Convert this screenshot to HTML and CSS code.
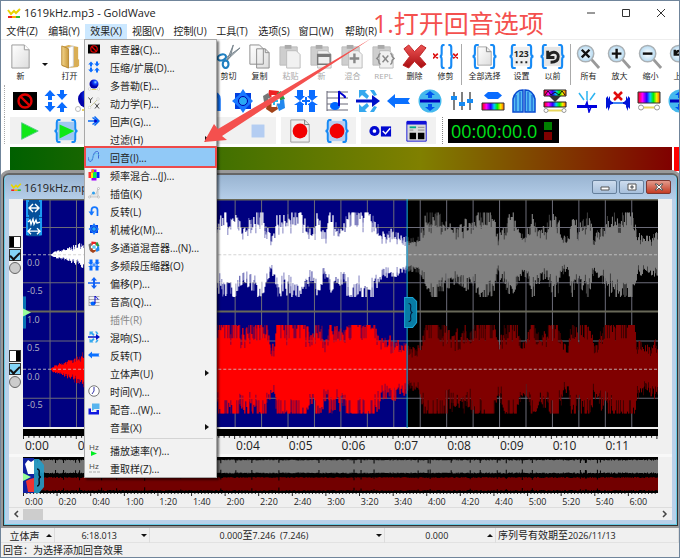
FILE: index.html
```html
<!DOCTYPE html>
<html lang="zh-CN">
<head>
<meta charset="utf-8">
<title>1619kHz.mp3 - GoldWave</title>
<link rel="stylesheet" href="styles.css">
</head>
<body>
<svg class="sprite" aria-hidden="true">
  <defs>
    <linearGradient id="rainbow"><stop offset="0" stop-color="#f00"/><stop offset=".2" stop-color="#f0f"/><stop offset=".4" stop-color="#20f"/><stop offset=".55" stop-color="#0cf"/><stop offset=".7" stop-color="#0e0"/><stop offset=".85" stop-color="#fe0"/><stop offset="1" stop-color="#f50"/></linearGradient>
    <linearGradient id="paper" x2="1" y2="1"><stop offset="0" stop-color="#fff"/><stop offset="1" stop-color="#ddd"/></linearGradient>
    <linearGradient id="folder"><stop offset="0" stop-color="#f4d58c"/><stop offset="1" stop-color="#c99a3c"/></linearGradient>
    <linearGradient id="crimson" x2="0" y2="1"><stop offset="0" stop-color="#e55"/><stop offset="1" stop-color="#a80c10"/></linearGradient>
    <radialGradient id="ball" cx=".65" cy=".3"><stop offset="0" stop-color="#9df"/><stop offset=".4" stop-color="#14f"/><stop offset="1" stop-color="#00a"/></radialGradient>
    <radialGradient id="lens"><stop offset="0" stop-color="#fff"/><stop offset="1" stop-color="#b5daf2"/></radialGradient>
  </defs>
  <symbol id="logo" viewBox="0 0 14 10"><path d="M1 2l3 4 3-3 2 2 4-4" fill="none" stroke="#e9d400" stroke-width="2"/><path d="M1 9h4" stroke="#e22" stroke-width="2"/><path d="M5 9h4" stroke="#fa0" stroke-width="2"/><path d="M9 9h4" stroke="#3b3" stroke-width="2"/></symbol>
  <symbol id="blocked" viewBox="0 0 24 24"><path d="M0 3h24v18H0z"/><circle cx="12" cy="12" r="6.5" fill="none" stroke="#e00000" stroke-width="2.4"/><path d="M7.5 7.5l9 9" stroke="#e00000" stroke-width="2.4"/></symbol>
  <symbol id="compress" viewBox="0 0 24 24"><g fill="#0a6cff"><path d="M6 1l5.500 6H8v4H4V7H.5zM6 23l5.500-6H8v-4H4v4H.5zM18 11l5.500-6H20V1h-4v4h-3.500zM18 13l5.500 6H20v4h-4v-4h-3.500z"/></g></symbol>
  <symbol id="doppler" viewBox="0 0 24 24"><circle cx="12" cy="10" r="9" fill="url(#ball)"/><circle cx="3" cy="20" r="2.500" fill="#fff" stroke="#bbb"/><circle cx="21" cy="20" r="2.500" fill="#fff" stroke="#bbb"/><path d="M7 21h10" stroke="#e8d060" stroke-width="2"/></symbol>
  <symbol id="dynamics" viewBox="0 0 24 24"><path d="M3 21L20 4" stroke="#c4c488" stroke-width="1.500"/><circle cx="20" cy="4" r="2.500" fill="#fff" stroke="#bbb"/><circle cx="3" cy="21" r="2.500" fill="#fff" stroke="#bbb"/><path d="M1 1l4 5 4-5M5 6v6M14 13l8 10M22 13l-8 10" fill="none" stroke="#444" stroke-width="2"/></symbol>
  <symbol id="echo" viewBox="0 0 24 24"><path d="M0 12h14M9 5l9 7-9 7M13 3l9 9-9 9" fill="none" stroke="#0668f5" stroke-width="3"/><circle cx="15" cy="12" r="3" fill="#00c"/></symbol>
  <symbol id="curve" viewBox="0 0 24 24"><path d="M0 12C1 24 8 24 10 12S19-1 21 3v12" fill="none" stroke="#3d66d6" stroke-width="2"/><path d="M0 15c5 7 9 1 11-5s8-8 12 0" fill="none" stroke="#57bde5" stroke-width="1.500"/></symbol>
  <symbol id="spectrum" viewBox="0 0 24 24"><path fill="#a000ff" d="M7 1h10v22H7z"/><path fill="#0020ff" d="M17 6h6v12h-6z"/><path fill="#f33" d="M1 6h6v12H1z"/><path fill="#fe0" d="M6 7h6v11H6z"/><path fill="#0e5" d="M10 6h7v12h-7z"/><path fill="#ff8a00" d="M7 1h5v6H7z"/></symbol>
  <symbol id="interp" viewBox="0 0 24 24"><path d="M3 20l6-8 7 2 4-11v17z" fill="#e6e6e6" stroke="#aaa"/><g fill="#fff" stroke="#999"><circle cx="3" cy="20" r="2"/><circle cx="21" cy="3" r="2"/><circle cx="21" cy="20" r="2"/></g><circle cx="11" cy="12" r="3" fill="#2b9fee"/></symbol>
  <symbol id="invert" viewBox="0 0 24 24"><path d="M7 20V10c0-8 12-8 12 0v12" fill="none" stroke="#1577ff" stroke-width="3.500"/><path d="M1 13h12l-6 8z" fill="#1577ff"/></symbol>
  <symbol id="gear" viewBox="0 0 24 24"><path fill="#003fe0" d="M4 4h16v16H4z"/><path fill="#1a78ff" d="M12 0l4 6 6 6-6 6-4 6-4-6-7-6 7-6z"/><circle cx="12" cy="12" r="4.500" fill="#29a9f4" stroke="#00a"/></symbol>
  <symbol id="mixer" viewBox="0 0 24 24"><path fill="#e22" d="M7 1l10 1-2 8-9-2z"/><path fill="#777" d="M1 7l5-3 4 8-7 7z"/><path fill="#2a9a42" d="M15 4l4-2 4 8-6 2z"/><path fill="#2288ee" d="M22 10l1 9-6 3-3-9z"/><path fill="#a3431a" d="M5 15l8-3 3 8-6 4-6-4z"/><path d="M12 6v12M6 12h12" stroke="#fff" stroke-width="5"/><path d="M12 8v8M8 12h8" stroke="#25bcec" stroke-width="2"/></symbol>
  <symbol id="inward" viewBox="0 0 24 24"><path fill="#0a6cff" d="M0 8h3V1h6v7h2l-5 4zM24 8h-3V1h-6v7h-2l5 4zM0 17l6-5 5 5H9v6H3v-6zM24 17l-6-5-5 5h2v6h6v-6z" transform="rotate(180 12 12)"/><path d="M12 8v8M8 12h8" stroke="#fff" stroke-width="4"/><path d="M12 8v8M8 12h8" stroke="#0a6cff" stroke-width="2"/></symbol>
  <symbol id="offset" viewBox="0 0 24 24"><path fill="#1262f5" d="M12 0l6 7h-4v3.500h10v3H14V17h4l-6 7-6-7h4v-3.500H0v-3h10V7H6z"/></symbol>
  <symbol id="pitch" viewBox="0 0 24 24"><path d="M2 2v20M2 3h21M2 9h21M2 15h21M2 21h21" stroke="#667" fill="none"/><ellipse cx="10" cy="17" rx="5" ry="4" fill="#06f"/><path d="M14 17V2c1 4 6 3 6 7" fill="none" stroke="#00c" stroke-width="2"/></symbol>
  <symbol id="reverb" viewBox="0 0 24 24"><path fill="#35a8ee" d="M3 1h8L9 3l4 4-2 3-5-4-3 3zM3 23h8l-2-2 4-4-2-3-5 4-3-3zM14 1h4l3 5-3 1zM14 23h4l3-5-3-1z"/><path fill="#0010c8" d="M0 10.500h16V6l8 6-8 6v-4.500H0z"/></symbol>
  <symbol id="left" viewBox="0 0 24 24"><path fill="#0a70ff" d="M0 12l8-7v4h15l-2 3 2 3H8v4z"/></symbol>
  <symbol id="clock" viewBox="0 0 24 24"><circle cx="12" cy="12" r="10.500" fill="#fff" stroke="#777" stroke-width="2"/><path d="M12 4v8l-4 6" fill="none" stroke="#33a" stroke-width="2"/></symbol>
  <symbol id="voice" viewBox="0 0 24 24"><path fill="#58b4ee" d="M8 1h15v11H13l-5 4z"/><path fill="#1018e0" d="M1 11h5v7h11v-4h5v9H1z"/></symbol>
  <symbol id="divide" viewBox="0 0 24 24"><circle cx="12" cy="12" r="11.500" fill="#45b9ee"/><path d="M2 12h20" stroke="#00b" stroke-width="3"/><path fill="#05e" d="M12 2l5 4h-3v3h-4V6H7zM12 22l5-4h-3v-3h-4v3H7z"/></symbol>
  <symbol id="sliders" viewBox="0 0 24 24"><path d="M4 3v18M12 3v18M20 3v18" stroke="#555" stroke-width="1.500"/><path fill="#168af2" d="M1 7h6v4H1zM9 13h6v4H9zM17 10h6v4h-6z"/></symbol>
  <symbol id="hexbar" viewBox="0 0 24 24"><path fill="#0a6cff" d="M7 3h10l4 3.500-4 3.500H7L3 6.500z"/><path fill="url(#rainbow)" stroke="#333" d="M1 14h22v7H1z"/></symbol>
  <symbol id="gate" viewBox="0 0 24 24"><path d="M1 23V10C3 2 8 1 11 1v22zM13 23V1c3 0 8 1 10 9v13z" fill="#57bdf3" stroke="#0749d0" stroke-width="1.500"/><path d="M4 6v16M8 3v19M16 3v19M20 6v16" stroke="#0749d0"/></symbol>
  <symbol id="spectra" viewBox="0 0 24 24"><path fill="url(#rainbow)" stroke="#222" d="M1 1h22v6H1zM1 13h22v5H1z"/><path d="M2 6l3-4 3 4 4-3 4 3 3-4 3 4" stroke="#111" fill="none"/><path d="M6 7h12l-6 6z" fill="#333"/><path d="M5 21.500h14" stroke="#e7d55c" stroke-width="2"/><circle cx="3" cy="21.500" r="2" fill="#fff" stroke="#999"/><circle cx="21" cy="21.500" r="2" fill="#fff" stroke="#999"/></symbol>
  <symbol id="click" viewBox="0 0 24 24"><path d="M12 2v9M4 4l5 7M20 4l-5 7" stroke="#2cb4f1" stroke-width="1.500"/><path d="M2 17.500h20" stroke="#00d" stroke-width="3"/><path d="M10 18l2-5 2 10 2-5" stroke="#00d" stroke-width="1.500" fill="none"/></symbol>
  <symbol id="pop" viewBox="0 0 24 24"><path fill="#0013d8" d="M0 9l2-2v3l2-3v4l2 2h12l2-2V7l2 3V7l2 2v11l-2-2v4l-2-4v-2l-2-1H6l-2 1v2l-2 4v-4l-2 2z"/><path d="M7 14h10" stroke="#5af" stroke-width="1.500"/><path d="M8 3l8 8M16 3l-8 8" stroke="#e10b0b" stroke-width="2.500"/></symbol>
  <symbol id="rack" viewBox="0 0 24 24"><path fill="url(#rainbow)" stroke="#333" d="M1 3h22v11H1z"/><path d="M5 18.500h14" stroke="#e7d55c" stroke-width="2"/><circle cx="4" cy="18.500" r="2.500" fill="#fff" stroke="#999"/><circle cx="20" cy="18.500" r="2.500" fill="#fff" stroke="#999"/></symbol>
  <symbol id="page" viewBox="0 0 26 26"><path d="M4 1h13l5 5v19H4z" fill="url(#paper)" stroke="#999"/><path d="M17 1v5h5" fill="#fff" stroke="#999"/></symbol>
  <symbol id="open" viewBox="0 0 26 26"><path d="M5 3l7-2 10 2v21l-10 1-7-2z" fill="#d9ae55"/><path d="M11 4l6-2v21l-6 2z" fill="#fff" stroke="#ccc"/><path d="M5 2l7 3v20l-7-3z" fill="url(#folder)" stroke="#b78a37"/><path d="M20 16h3v7h-3z" fill="#d9ae55"/></symbol>
  <symbol id="cut" viewBox="0 0 26 26"><path d="M8 16L25 4 10 18zM11 18L18 1l-3 12z" fill="#bcc4ca" stroke="#77838b"/><ellipse cx="6" cy="14" rx="4.500" ry="3" fill="none" stroke="#1f7fc0" stroke-width="2.200" transform="rotate(-20 6 14)"/><ellipse cx="10" cy="21" rx="3" ry="4" fill="none" stroke="#1f7fc0" stroke-width="2.200"/></symbol>
  <symbol id="copy" viewBox="0 0 26 26"><path d="M3 1h10l4 4v16H3zM10 5h9l4 4v16H10z" fill="url(#paper)" stroke="#8c8c8c"/><path d="M19 5v4h4" fill="none" stroke="#8c8c8c"/></symbol>
  <symbol id="paste" viewBox="0 0 26 26"><path d="M2 3h18v19H2z" fill="#cecece" stroke="#bbb"/><path d="M7 1h7v4H7z" fill="#aaa"/><path d="M9 7h10l4 4v14H9z" fill="#f1f1f1" stroke="#bbb"/></symbol>
  <symbol id="delete" viewBox="0 0 26 26"><path d="M2 5l5-4 6 7 7-7 5 3-7 9 7 8-5 4-7-7-6 7-6-3 7-9z" fill="url(#crimson)" stroke="#b22"/></symbol>
  <symbol id="braces" viewBox="0 0 26 26"><path d="M7 1H5Q3 1 3 4v6q0 3-2.500 3Q3 13 3 16v6q0 3 2 3h2M19 1h2q2 0 2 3v6q0 3 2.500 3-2.500 0-2.500 3v6q0 3-2 3h-2" fill="none" stroke="#168af5" stroke-width="2.200"/></symbol>
  <symbol id="trim" viewBox="0 0 26 26"><path d="M12 1h-1Q9 1 9 4v6q0 3-2 3 2 0 2 3v6q0 3 2 3h1M16 1h1q2 0 2 3v6q0 3 2 3-2 0-2 3v6q0 3-2 3h-1" fill="none" stroke="#168af5" stroke-width="2.200"/><path d="M0 10l5 5M5 10l-5 5M21 10l5 5M26 10l-5 5" stroke="#d11" stroke-width="1.800"/></symbol>
  <symbol id="zoombase" viewBox="0 0 26 26"><path d="M16 16l8 9" stroke="#999" stroke-width="3"/><circle cx="10" cy="10" r="8.500" fill="url(#lens)" stroke="#aab0b4" stroke-width="1.500"/></symbol>
  <symbol id="undo" viewBox="0 0 26 26"><path d="M8 7v7h7M8 14c3-8 11-6 11-1s-4 6-8 6" fill="none" stroke="#222" stroke-width="3"/></symbol>
</svg>

<main class="app">
  <header class="titlebar">
    <svg class="logo"><use href="#logo"/></svg><h1>1619kHz.mp3 - GoldWave</h1>
    <div class="winbtns">
      <button aria-label="最小化"><svg viewBox="0 0 10 10"><path d="M1 5h8"/></svg></button>
      <button aria-label="最大化"><svg viewBox="0 0 10 10"><path d="M1.500 1.500h7v7h-7z"/></svg></button>
      <button aria-label="关闭"><svg viewBox="0 0 10 10"><path d="M1 1l8 8M9 1L1 9"/></svg></button>
    </div>
  </header>

  <nav class="menubar">
    <button>文件(Z)</button><button>编辑(Y)</button>
    <div class="menuhost">
      <button class="active">效果(X)</button>
      <div class="menu">
        <button><svg><use href="#blocked"/></svg>审查器(C)...</button>
        <button><svg><use href="#compress"/></svg>压缩/扩展(D)...</button>
        <button><svg><use href="#doppler"/></svg>多普勒(E)...</button>
        <button><svg><use href="#dynamics"/></svg>动力学(F)...</button>
        <button><svg><use href="#echo"/></svg>回声(G)...</button>
        <button class="sub"><svg></svg>过滤(H)</button>
        <button class="chosen"><svg><use href="#curve"/></svg>回音(I)...</button>
        <button><svg><use href="#spectrum"/></svg>频率混合...(J)...</button>
        <button><svg><use href="#interp"/></svg>插值(K)</button>
        <button><svg><use href="#invert"/></svg>反转(L)</button>
        <button><svg><use href="#gear"/></svg>机械化(M)...</button>
        <button><svg><use href="#mixer"/></svg>多通道混音器...(N)...</button>
        <button><svg><use href="#inward"/></svg>多频段压缩器(O)</button>
        <button><svg><use href="#offset"/></svg>偏移(P)...</button>
        <button><svg><use href="#pitch"/></svg>音高(Q)...</button>
        <button disabled><svg></svg>插件(R)</button>
        <button><svg><use href="#reverb"/></svg>混响(S)...</button>
        <button><svg><use href="#left"/></svg>反转(T)</button>
        <button class="sub"><svg></svg>立体声(U)</button>
        <button><svg><use href="#clock"/></svg>时间(V)...</button>
        <button><svg><use href="#voice"/></svg>配音...(W)...</button>
        <button class="sub"><svg></svg>音量(X)</button>
        <hr>
        <button><svg viewBox="0 0 12 12"><text x="1" y="6" class="glyph">Hz</text><path fill="#0e2" d="M3 7l6 2.500L3 12z"/></svg>播放速率(Y)...</button>
        <button><svg viewBox="0 0 12 12"><text x="1" y="7" class="glyph">Hz</text><path d="M1 10h3M5 10h3M9 10h3" stroke="#aaa"/></svg>重取样(Z)...</button>
      </div>
    </div>
    <button>视图(V)</button><button>控制(U)</button><button>工具(T)</button><button>选项(S)</button><button>窗口(W)</button><button>帮助(R)</button>
  </nav>

  <section class="tools">
    <button><svg><use href="#page"/></svg>新</button>
    <button class="caret" aria-label="更多"><i class="down"></i></button>
    <button><svg><use href="#open"/></svg>打开</button>
    <span class="gap"></span>
    <button><svg><use href="#cut"/></svg>剪切</button>
    <button><svg><use href="#copy"/></svg>复制</button>
    <button disabled><svg><use href="#paste"/></svg>粘贴</button>
    <button disabled><svg viewBox="0 0 26 26"><use href="#paste"/><path d="M9 11h13v10H9z" fill="#eee" stroke="#777" stroke-width="1.500"/><path d="M9 12h13" stroke="#777" stroke-width="3"/></svg>新</button>
    <button disabled><svg viewBox="0 0 26 26"><use href="#paste"/><path d="M15 10v10M10 15h10" stroke="#888" stroke-width="2.500"/></svg>混合</button>
    <button disabled><svg viewBox="0 0 26 26"><use href="#paste"/><path d="M10 10q-2 0-2 3l-2 2 2 2q0 4 2 4M20 10q2 0 2 3l2 2-2 2q0 4-2 4M12 12l6 7M18 12l-6 7" fill="none" stroke="#888" stroke-width="1.500"/></svg>REPL</button>
    <button><svg><use href="#delete"/></svg>删除</button>
    <button><svg><use href="#trim"/></svg>修剪</button>
    <span class="rule"></span>
    <button class="wide"><svg viewBox="0 0 26 26"><path d="M6 3h9l5 5v14H6z" fill="url(#paper)" stroke="#aaa"/><path d="M15 3v5h5" fill="none" stroke="#888"/><use href="#braces"/></svg>全部选择</button>
    <button><svg viewBox="0 0 26 26"><path d="M4 3h18v20H4z" fill="#eee"/><use href="#braces"/><text x="5" y="14" class="num">123</text><path d="M7 19h12" stroke="#222" stroke-width="2" stroke-dasharray="2 3"/></svg>设置</button>
    <button><svg viewBox="0 0 26 26"><path d="M4 3h18v20H4z" fill="#e5e5e5"/><use href="#braces"/><use href="#undo"/></svg>以前</button>
    <span class="rule"></span>
    <button><svg viewBox="0 0 26 26"><use href="#zoombase"/><path d="M6 6l8 8M14 6l-8 8" stroke="#111" stroke-width="2.500"/></svg>所有</button>
    <button><svg viewBox="0 0 26 26"><use href="#zoombase"/><path d="M10 5v10M5 10h10" stroke="#111" stroke-width="2.500"/></svg>放大</button>
    <button><svg viewBox="0 0 26 26"><use href="#zoombase"/><path d="M5 10h10" stroke="#111" stroke-width="2.500"/></svg>缩小</button>
    <button><svg viewBox="0 0 26 26"><use href="#zoombase"/><path d="M6 6v5h5M6 11c3-6 8-4 8 1" fill="none" stroke="#111" stroke-width="2.500"/></svg>上一</button>
  </section>

  <section class="effects">
    <button aria-label="审查器"><svg><use href="#blocked"/></svg></button>
    <button aria-label="压缩"><svg><use href="#compress"/></svg></button>
    <button aria-label="多普勒"><svg><use href="#doppler"/></svg></button>
    <button aria-label="动力学"><svg><use href="#dynamics"/></svg></button>
    <button aria-label="回声"><svg><use href="#echo"/></svg></button>
    <button aria-label="回音"><svg><use href="#curve"/></svg></button>
    <button aria-label="反转"><svg><use href="#invert"/></svg></button>
    <button aria-label="机械化"><svg><use href="#gear"/></svg></button>
    <button aria-label="混音器"><svg><use href="#mixer"/></svg></button>
    <button aria-label="压缩器"><svg><use href="#inward"/></svg></button>
    <button aria-label="音高"><svg><use href="#pitch"/></svg></button>
    <button aria-label="混响"><svg><use href="#reverb"/></svg></button>
    <button aria-label="反转"><svg><use href="#left"/></svg></button>
    <button aria-label="偏移"><svg><use href="#divide"/></svg></button>
    <button aria-label="均衡器"><svg><use href="#sliders"/></svg></button>
    <button aria-label="滤波"><svg><use href="#hexbar"/></svg></button>
    <button aria-label="噪声门"><svg><use href="#gate"/></svg></button>
    <button aria-label="降噪"><svg><use href="#spectra"/></svg></button>
    <button aria-label="平滑"><svg><use href="#click"/></svg></button>
    <button aria-label="爆音"><svg><use href="#pop"/></svg></button>
    <button aria-label="频谱"><svg><use href="#rack"/></svg></button>
    <button aria-label="立体声"><svg><use href="#divide"/></svg></button>
  </section>

  <section class="transport">
    <div class="group first">
      <button aria-label="播放"><svg viewBox="0 0 26 26"><path d="M5 4l18 9-18 9z" fill="#10e818" stroke="#5c8"/></svg></button>
      <button aria-label="播放选区"><svg viewBox="0 0 26 26"><path d="M4 3h18v20H4z" fill="#9fc8f2"/><use href="#braces"/><path d="M6 6l16 7-16 8z" fill="#10e818"/></svg></button>
      <button class="stop" aria-label="停止"><svg viewBox="0 0 26 26"><path d="M6 6h14v14H6z" fill="#b4cdf2"/></svg></button>
    </div>
    <div class="group">
      <button aria-label="录音"><svg viewBox="0 0 26 26"><path d="M3 1h15l5 5v19H3z" fill="#eee" stroke="#999"/><path d="M18 1v5h5" fill="none" stroke="#777"/><circle cx="13" cy="13" r="8" fill="#f20000"/></svg></button>
      <button aria-label="录音选区"><svg viewBox="0 0 26 26"><path d="M4 2h18v22H4z" fill="#b5cef0"/><use href="#braces"/><circle cx="13" cy="13" r="8" fill="#f20000"/></svg></button>
    </div>
    <div class="group">
      <button aria-label="选项"><svg viewBox="0 0 26 26"><circle cx="7" cy="13" r="5.500" fill="#0008d0"/><circle cx="7" cy="13" r="2" fill="#fff"/><path d="M14 8h11v11H14z" fill="#0008d0"/><path d="M16 13l3 3 5-6" fill="none" stroke="#fff" stroke-width="1.500"/></svg></button>
      <button aria-label="窗口"><svg viewBox="0 0 26 26"><path d="M2 3h21v21H2z" fill="#d9d9d9" stroke="#1010d8"/><path d="M2 2h21v4H2z" fill="#1010d8"/><path d="M5 15h7v7H5zM14 15h7v7h-7z"/><path d="M5 9h7" stroke="#0a8" stroke-width="2"/><path d="M5 12h4M14 9h7M14 12h7" stroke="#888"/></svg></button>
    </div>
    <span class="dots"></span>
    <output class="clock">00:00:00.0<i></i></output>
  </section>

  <div class="meter"><span></span><b></b></div>

  <section class="child">
    <header class="childbar">
      <svg class="logo"><use href="#logo"/></svg><h2>1619kHz.mp3</h2>
      <button aria-label="最小化"><svg viewBox="0 0 12 8"><path d="M2 4h8v3H2z"/></svg></button>
      <button aria-label="最大化"><svg viewBox="0 0 12 8"><path d="M2 1h8v6H2zM5 3h2v2H5z"/></svg></button>
      <button class="shut" aria-label="关闭"><svg viewBox="0 0 12 8"><path d="M2 1h2l2 2 2-2h2L7.500 4 10 7H8L6 5 4 7H2l2.500-3z"/></svg></button>
    </header>
    <div class="editor">
      <div class="channels">
        <div><button class="half" aria-label="左声道"></button><input type="checkbox" checked aria-label="左声道启用"><input type="radio" name="solo" aria-label="左声道独奏"></div>
        <div><button class="half flip" aria-label="右声道"></button><input type="checkbox" checked aria-label="右声道启用"><input type="radio" name="solo" aria-label="右声道独奏"></div>
      </div>
      <div class="wave">
        <svg id="wave" viewBox="0 0 634 236" preserveAspectRatio="none"></svg>
        <div class="levels"><span>0.0</span><span>-0.5</span><span>1.0</span><span>0.5</span><span>0.0</span><span>-0.5</span></div>
      </div>
    </div>
    <div class="ruler"><svg id="ticks" viewBox="0 0 634 5" preserveAspectRatio="none"></svg><div id="seconds" class="labels"></div></div>
    <div class="overview"><svg id="over" viewBox="0 0 634 39" preserveAspectRatio="none"></svg><div id="minutes" class="labels small"></div></div>
    <div class="scroll"><button aria-label="向左"><svg viewBox="0 0 6 8"><path d="M5 1L2 4l3 3"/></svg></button><span></span><button aria-label="向右"><svg viewBox="0 0 6 8"><path d="M1 1l3 3-3 3"/></svg></button></div>
  </section>

  <footer class="status">
    <div class="cells">
      <div><em>立体声</em><i class="up"></i></div>
      <div><span>6:18.013</span><i class="down"></i></div>
      <div><span>0.000<em>至</em>7.246&nbsp; (7.246)</span><i class="down"></i></div>
      <div><span>0.000</span><i class="up"></i></div>
      <div><span><em>序列号有效期至</em>2026/11/13</span></div>
    </div>
    <p>回音：为选择添加回音效果</p>
  </footer>

  <strong class="note">1.打开回音选项</strong>
  <svg class="arrow" viewBox="0 0 170 106" aria-hidden="true"><path d="M1 105L11 87l4 5L169 1 19 99l5 4z" fill="#f4504e"/></svg>
</main>
<script src="wave.js"></script>
</body>
</html>
```
FILE: styles.css
```css
* { box-sizing: border-box; }
body { margin: 0; font: 10px "Open Sans", "Noto Sans CJK SC", sans-serif; color: #222; overflow: hidden; }
button { font: inherit; color: inherit; border: 0; padding: 0; background: none; }
h1, h2, p { margin: 0; font-weight: 400; }
i, em { font-style: normal; }
svg { display: block; }
.sprite { position: absolute; width: 0; height: 0; }
.glyph { font: 8px "Open Sans", sans-serif; fill: #444; }
.num { font: bold 9px "Open Sans", sans-serif; fill: #222; }

.app { position: relative; display: flex; flex-direction: column; height: 100vh; min-height: 500px; background: #fff; border: 1px solid #70859b; overflow: hidden; }
.logo { width: 14px; height: 10px; flex: none; }

.titlebar { display: flex; align-items: center; height: 23px; flex: none; padding-left: 6px; gap: 3px; }
.titlebar h1 { font-size: 11px; flex: 1; }
.winbtns { display: flex; margin-right: 1px; }
.winbtns button { width: 35px; display: grid; place-items: center; }
.winbtns svg { width: 10px; height: 10px; fill: none; stroke: #333; }

.menubar { display: flex; height: 15px; flex: none; background: #fff; }
.menubar > button, .active { width: 42px; height: 15px; line-height: 15px; white-space: nowrap; }
.menubar > button:last-child { margin-left: 3px; }
.active { background: #cce8ff; }
.menuhost { position: relative; z-index: 3; width: 42px; }
.menu { position: absolute; top: 15px; left: -1px; width: 133px; padding: 0 1px; background: #f2f2f2; border: 1px solid #a8a8a8; box-shadow: 2px 2px 2px #0008; }
.menu button { display: flex; align-items: center; gap: 10px; width: 100%; height: 18px; padding-left: 2px; white-space: nowrap; }
.menu svg { width: 12px; height: 12px; flex: none; }
.menu button:disabled { color: #888; }
.menu .sub::after { content: ""; margin-left: auto; margin-right: 6px; border: 3px solid transparent; border-left: 4px solid #111; border-right: 0; }
.menu .chosen { background: #91c9f7; outline: 2px solid #ee4a4a; }
.menu hr { margin: 2px 2px 2px 24px; border: 0; border-top: 1px solid #d4d4d4; }

.tools { display: flex; height: 46px; flex: none; padding: 4px 0 0 4px; border-top: 1px solid #eee; }
.tools button { width: 31px; flex: none; display: flex; flex-direction: column; align-items: center; gap: 1px; font-size: 8px; line-height: 12px; white-space: nowrap; }
.tools svg { width: 25px; height: 25px; }
.tools button:disabled { color: #aaa; }
.tools .caret { width: 18px; justify-content: center; }
.tools .wide { width: 43px; }
.gap { width: 128px; flex: none; }
.rule { width: 1px; background: #aaa; flex: none; margin-right: 1px; }
.rule ~ .rule { margin: 0 2px; }
.down, .up { border: 3px solid transparent; width: 0; height: 0; }
.down { border-top: 3px solid #111; border-bottom: 0; }
.up { border-bottom: 3px solid #111; border-top: 0; }

.effects { display: grid; grid-auto-flow: column; grid-auto-columns: 4.66%; height: 32px; flex: none; margin-left: 3px; padding-left: 4px; border-left: 1px dotted #aaa; }
.effects button { display: grid; place-items: center; }
.effects svg { width: 24px; height: 24px; }

.transport { display: flex; gap: 5px; height: 27px; flex: none; margin-left: 3px; padding-left: 5px; border-left: 1px dotted #aaa; }
.group { display: flex; align-items: center; width: 75px; flex: none; background: #f1f1f1; }
.group button { flex: 1; display: grid; place-items: center; }
.group svg { width: 24px; height: 24px; }
.group.first { width: 266px; }
.first button { flex: 0 0 37px; }
.first .stop { margin-left: auto; }
.dots { width: 1px; border-left: 1px dotted #888; margin-left: 1px; }
.clock { display: flex; align-items: center; justify-content: space-between; width: 111px; height: 24px; padding: 0 7px 0 3px; margin-top: 2px; background: #000; color: #00e51c; font-size: 18px; line-height: 24px; }
.clock i { width: 8px; height: 18px; background: linear-gradient(#008000 44%, #000 44% 56%, #800000 56%); }

.meter { display: flex; gap: 2px; height: 24px; flex: none; margin: 3px 0 0 9px; background: #fff; }
.meter span { flex: 1; background: linear-gradient(90deg, #006000, #808000 62%, #800000); }
.meter b { width: 5px; background: red; }

.child { flex: 1; min-height: 0; display: flex; flex-direction: column; margin: 2px 1px 0 2px; padding: 0 5px 5px 5px; background: #b9d1ea; border: 1px solid #333; border-top: 2px solid #666; border-radius: 6px 6px 0 0; box-shadow: inset 0 0 0 1px #68cbe6, 0 0 0 3px #999; }
.childbar { display: flex; align-items: center; gap: 2px; height: 24px; flex: none; margin: 0 -4px; padding: 0 5px; background: linear-gradient(#99b4d1, #b5cee9); border-radius: 5px 5px 0 0; }
.childbar h2 { flex: 1; font-size: 11px; }
.childbar button { width: 25px; height: 14px; display: grid; place-items: center; border: 1px solid #66809c; border-radius: 2px; background: linear-gradient(#cddcee, #a7c0dc); }
.childbar .shut { background: linear-gradient(#e39a8c, #c43c24); border-color: #7d3832; }
.childbar svg { width: 12px; height: 8px; fill: #fff; stroke: #555; stroke-width: 1px; fill-rule: evenodd; }
.editor { display: flex; flex: 1; min-height: 0; padding-right: 14px; background: #f0f0f0; }
.channels { width: 14px; flex: none; display: grid; grid-template-rows: 111fr 117fr 8fr; align-items: center; }
.channels div { display: grid; gap: 1px; }
.channels input, .half { appearance: none; width: 12px; height: 12px; margin: 0; border: 1px solid #333; }
.half { background: linear-gradient(90deg, #000 45%, #fff 45%); }
.half.flip { background: linear-gradient(90deg, #fff 60%, #000 60%); }
.channels input:checked { background: #83d4f6; display: grid; place-items: center; }
.channels input:checked::after { content: ""; width: 8px; height: 4px; border: solid #111; border-width: 0 0 2px 2px; rotate: -45deg; }
.channels input[type=radio] { border-radius: 50%; background: #ccc; border-color: #666; }
.wave { position: relative; flex: 1; min-width: 0; background: #000; }
.wave > svg { position: absolute; width: 100%; height: 100%; }
.levels { position: relative; height: 100%; display: grid; grid-template-rows: 24% repeat(6, 12%); padding-left: 4px; color: #b5b5c5; font-size: 9px; line-height: 14px; }
.levels::before { content: ""; }

.ruler, .overview { flex: none; padding: 0 14px; background: #f0f0f0; }
.ruler svg { width: 100%; height: 3px; }
.ruler { height: 21px; border-bottom: 3px solid #f8f8f8; }
.labels { display: flex; overflow: hidden; font-size: 12px; line-height: 14px; }
.labels span { flex: 0 0 8.31%; padding-left: 2px; }
.labels.small { font-size: 9px; line-height: 11px; }
.small span { flex-basis: 5.29%; }
.overview svg { width: 100%; height: 39px; }
.scroll { display: flex; align-items: center; height: 13px; flex: none; background: #f0f0f0; border-top: 1px solid #ddd; }
.scroll button { width: 14px; display: grid; place-items: center; }
.scroll svg { width: 6px; height: 8px; fill: none; stroke: #444; stroke-width: 1.5px; }
.scroll span { width: 20px; height: 11px; background: #cdcdcd; }
.scroll button:last-child { margin-left: auto; }

.status { flex: none; background: #f0f0f0; border-top: 2px solid #999; position: relative; z-index: 1; }
.cells { display: grid; grid-template-columns: 8% 14% 34.600% 16.400% 1fr; height: 15px; line-height: 14px; font-size: 9px; border-bottom: 1px solid #e2e2e2; }
.cells div { display: flex; align-items: center; padding: 0 2px; border-right: 1px solid #ddd; white-space: nowrap; }
.cells div > :first-child { flex: 1; text-align: center; }
.cells div:last-child > span { text-align: left; }
.cells em, .status p { font-size: 10px; line-height: 14px; }
.status p { padding-left: 2px; }

.note { position: absolute; z-index: 5; left: 372px; top: 4px; font-size: 25px; line-height: 36px; font-weight: 400; color: #f4504e; white-space: nowrap; }
.arrow { position: absolute; z-index: 5; left: 202px; top: 36px; width: 170px; height: 106px; }
```
FILE: wave.js
```js
// Deterministic noise so the waveform is the same on every load.
let seed = 7;
const rnd = () => (seed = (seed * 16807) % 2147483647) / 2147483647;

// Envelope: time position (canvas units) and peak height.
const env = [[0,0],[27,0],[32,3],[42,5],[50,8],[61,12],[100,22],[150,34],[194,32],[202,42],[206,34],[213,42],[217,28],[224,32],[230,37],[238,42],[243,30],[247,18],[251,19],[254,42],[262,34],[268,41],[278,42],[282,34],[289,22],[294,38],[300,26],[303,21],[307,42],[311,30],[320,26],[325,41],[337,42],[348,42],[354,28],[360,20],[367,23],[377,18],[392,16],[397,18],[402,40],[409,42],[417,36],[424,30],[435,26],[442,33],[447,28],[453,42],[469,42],[474,17],[480,30],[489,42],[497,20],[503,22],[509,41],[517,22],[522,28],[529,42],[534,36],[539,18],[545,16],[548,40],[555,26],[565,42],[570,18],[577,26],[587,38],[595,42],[609,42],[613,20],[622,17],[634,20]];
function level(x) {
  let i = 1;
  while (env[i][0] < x) i++;
  const [a, p] = env[i - 1], [b, q] = env[i];
  return p + (q - p) * (x - a) / (b - a);
}
function bars(mid, gain, cap, from, to, color) {
  let solid = "", soft = "";
  for (let x = from; x < to; x++) {
    const e = level(x + 0.5) * gain;
    const side = () => Math.min(cap, e * (0.7 + 0.45 * rnd()));
    const t = side(), b = side();
    const st = t * (rnd() < 0.35 ? 0.7 : 1), sb = b * (rnd() < 0.35 ? 0.7 : 1);
    soft += `M${x} ${mid - t}h1V${mid + b}h-1z`;
    solid += `M${x} ${mid - st}h1V${mid + sb}h-1z`;
  }
  return `<path d="${soft}" fill="${color}" opacity=".5"/><path d="${solid}" fill="${color}"/>`;
}

const sel = 383;
let s = `<path fill="#000080" d="M0 0h${sel}v227H0z"/>`;
let grid = "";
for (let x = 27; x < 634; x += 26.4) grid += `M${x.toFixed(1)} 0V236`;
for (const y of [28, 83, 141, 198]) grid += `M0 ${y}.5H634`;
s += `<path d="${grid}" stroke="#6b6b78" fill="none"/><path d="M0 .5H634M0 112h634" stroke="#686858" stroke-width="2"/>`;
s += bars(55.5, 1, 42, 28, sel, "#fff") + bars(55.5, 1, 42, sel, 634, "#808080");
s += bars(169.5, 1.35, 44, 28, sel, "#f00") + bars(169.5, 1.35, 44, sel, 634, "#800000");
s += `<path d="M0 55.500H634M0 169.500H634" stroke="#ccc" opacity=".8" stroke-dasharray="3 2"/>
<path d="M0 228H634" stroke="#eee" stroke-width="2"/><path fill="#000" d="M0 229h634v7H0z"/>
<path d="M${sel + 0.5} 0V228" stroke="#16b7f0"/>
<path d="M381 98h8l4 4v21l-4 5h-8z" fill="#087ca5" stroke="#1aa5d5"/><path d="M385 104q3 0 2 5 0 4 2 4-2 0-2 4 1 5-2 5" fill="none" stroke="#013"/>
<path fill="#0873b4" d="M0 97h3v32H0z"/><path d="M0 109l8 4-8 4z" fill="#9f9"/>
<rect x="3" y="1" width="16" height="36" rx="3" fill="#06509b"/><path d="M6 2H4v15h2M16 2h2v15h-2M6 20H4v15h2M16 20h2v15h-2" fill="none" stroke="#1b9cf2" stroke-width="2"/>
<path d="M10 5L6 9l4 4M12 5l4 4-4 4M7 9h8M5 23l2-2 1 4 2-5 1 5 2-4 1 3 3-1M5 32h12M8 29l-3 3 3 3M14 29l3 3-3 3" fill="none" stroke="#fff" stroke-width="1.400"/>`;
document.getElementById("wave").innerHTML = s;

let ticks = "";
for (let i = 0; i <= 120; i++) ticks += `M${(0.5 + i * 5.27).toFixed(1)} 0v${i % 10 ? 3 : 5}`;
document.getElementById("ticks").innerHTML = `<path d="${ticks}" stroke="#222" fill="none"/>`;

let o = `<path d="M0 0h634v36H0z"/>`, grey = "", red = "", marks = "";
for (let x = 0; x < 634; x++) {
  const dip = rnd() < 0.07 ? 3 : 0, k = 7 - rnd() - dip, m = 7 - rnd() - dip * rnd();
  grey += `M${x} ${9.5 - k}h1v${2 * k}h-1z`;
  red += `M${x} ${27 - m}h1v${2 * m}h-1z`;
}
for (let i = 0; i <= 189; i++) marks += `M${(0.5 + i * 3.355).toFixed(1)} 36v${i % 10 ? 1 : 3}`;
o += `<path d="${grey}" fill="#747474"/><path d="${red}" fill="#720000"/><path d="${marks}" stroke="#222"/>
<path d="M0 1h11v35H0z" fill="#1020a0"/><path d="M2 7l3-4 3 2 3-2v14H5z" fill="#fff"/><path d="M3 24l4-2 4-1v14H5z" fill="#e33"/>
<path d="M11 2h5l5 6v22l-5 6h-5z" fill="#249cc8" opacity=".9"/><path d="M14 12q3 0 2 5 0 3 2 3-2 0-2 3 1 6-2 6" fill="none" stroke="#012" stroke-width="1.500"/><path d="M0 16l8 4-8 4z" fill="#9f9"/>`;
document.getElementById("over").innerHTML = o;

const fill = (id, list) => { document.getElementById(id).innerHTML = list.map(t => `<span>${t}</span>`).join(""); };
fill("seconds", Array.from({ length: 12 }, (_, i) => "0:" + String(i).padStart(2, "0")));
fill("minutes", Array.from({ length: 19 }, (_, i) => Math.floor(i / 3) + ":" + ["00", "20", "40"][i % 3]));
```
